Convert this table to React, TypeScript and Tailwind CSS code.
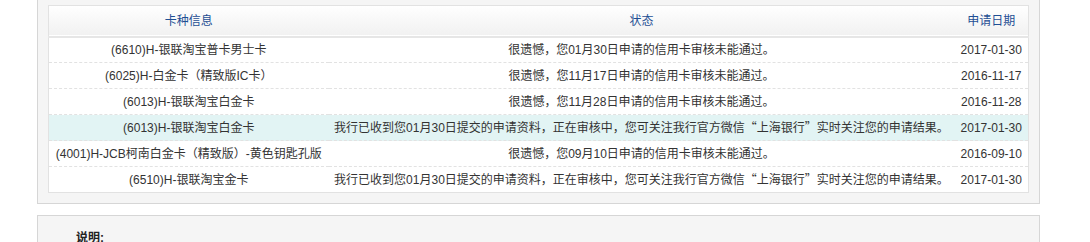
const rows = [
  { card: '(6610)H-银联淘宝普卡男士卡', status: '很遗憾，您01月30日申请的信用卡审核未能通过。', date: '2017-01-30' },
  { card: '(6025)H-白金卡（精致版IC卡）', status: '很遗憾，您11月17日申请的信用卡审核未能通过。', date: '2016-11-17' },
  { card: '(6013)H-银联淘宝白金卡', status: '很遗憾，您11月28日申请的信用卡审核未能通过。', date: '2016-11-28' },
  { card: '(6013)H-银联淘宝白金卡', status: 'wechat', date: '2017-01-30' },
  { card: '(4001)H-JCB柯南白金卡（精致版）-黄色钥匙孔版', status: '很遗憾，您09月10日申请的信用卡审核未能通过。', date: '2016-09-10' },
  { card: '(6510)H-银联淘宝金卡', status: 'wechat', date: '2017-01-30' },
]

function Pending() {
  return (
    <>
      我行已收到您01月30日提交的申请资料，正在审核中，您可关注我行官方微信
      <span className="font-['Noto_Sans_CJK_SC',sans-serif]">“</span>上海银行
      <span className="font-['Noto_Sans_CJK_SC',sans-serif]">”</span>实时关注您的申请结果。
    </>
  )
}

export default function App() {
  return (
    <div className="w-[1090px] h-[242px] overflow-hidden bg-white text-[12px] text-[#333] font-['Liberation_Sans','Noto_Sans_CJK_SC',sans-serif]">
      <div className="ml-[37px] w-[1003px] -mt-px border border-[#d6d6d6] bg-[#f5f5f5] pt-[5px] pb-[10px] px-[10px]">
        <table className="w-[980px] table-fixed border-collapse border border-[#e2e2e2] bg-white">
          <colgroup>
            <col className="w-[280px]" />
            <col className="w-[626px]" />
            <col className="w-[74px]" />
          </colgroup>
          <thead>
            <tr className="h-[31px] bg-gradient-to-b from-white to-[#f1f1f1] border-b-2 border-[#e6e6e6] text-[#1f4f94]">
              <th className="font-normal text-center">卡种信息</th>
              <th className="font-normal text-center">状态</th>
              <th className="font-normal text-center">申请日期</th>
            </tr>
          </thead>
          <tbody>
            {rows.map((r, i) => (
              <tr
                key={i}
                className={`h-[26px] ${i < rows.length - 1 ? 'border-b border-dashed border-[#e2e2e2]' : ''} ${i === 3 ? 'bg-[#e2f4f4]' : ''}`}
              >
                <td className="text-center whitespace-nowrap">{r.card}</td>
                <td className="text-center whitespace-nowrap">{r.status === 'wechat' ? <Pending /> : r.status}</td>
                <td className="text-center whitespace-nowrap">{r.date}</td>
              </tr>
            ))}
          </tbody>
        </table>
      </div>
      <div className="ml-[37px] mt-[11px] w-[1003px] h-[40px] border border-[#d6d6d6] bg-[#f5f5f5] pl-[38px] pt-[13px]">
        <span className="font-bold text-[#222]">说明:</span>
      </div>
    </div>
  )
}
